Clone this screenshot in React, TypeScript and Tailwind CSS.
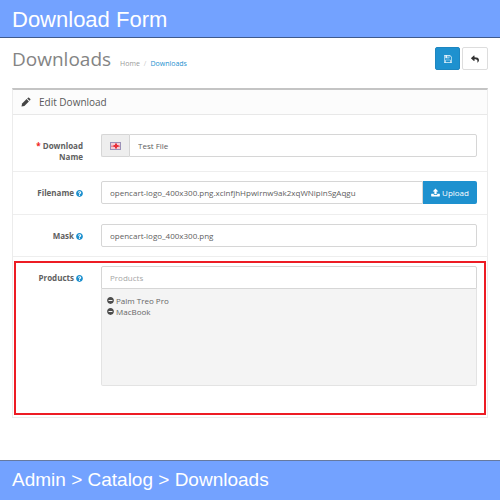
import React, { useState } from 'react';
import { FaMinusCircle, FaQuestionCircle, FaReply } from 'react-icons/fa';
import clsx from 'clsx';

interface FormRowProps {
    label: string;
    htmlFor: string;
    required?: boolean;
    help?: boolean;
    className?: string;
    children: React.ReactNode;
}

const inputStyles =
    'w-full min-w-0 border border-[#d6d6d6] bg-white px-2 text-[8px] text-[#606060] outline-none placeholder:text-[#a6a6a6]';

const FormRow: React.FC<FormRowProps> = ({ label, htmlFor, required, help, className, children }) => (
    <div className={clsx('flex gap-[18px] pr-[10px]', className)}>
        <label
            htmlFor={htmlFor}
            className="w-[70px] shrink-0 pt-[6px] text-right text-[8px] leading-[11px] font-bold text-[#606060]"
        >
            {required && <span className="text-[#f02020]">* </span>}
            {label}
            {help && <FaQuestionCircle className="ml-[2px] inline size-[7px] align-[-1px] text-[#1e91cf]" />}
        </label>
        <div className="min-w-0 flex-1">{children}</div>
    </div>
);

const FlagIcon = () => (
    <svg viewBox="0 0 11 8" className="h-2 w-[11px]" aria-hidden="true">
        <rect x="0.5" y="0.5" width="10" height="7" fill="#f3cdd6" stroke="#9c92b8" />
        <path d="M1 3.5h9v1.5H1z" fill="#ee8a94" />
        <path d="M5 1.5h2v1.5h1.5v2H7v1.5H5V5H3.5V3H5z" fill="#ea2f3a" />
    </svg>
);

const PencilIcon = () => (
    <svg viewBox="0 0 10 10" className="size-[10px]" fill="currentColor" aria-hidden="true">
        <path d="M0.5 9.5l0.6-2.9 4.5-4.5 2.3 2.3-4.5 4.5z" />
        <path d="M6.2 1.5l0.8-0.8q0.5-0.4 1 0l1.3 1.3q0.4 0.5 0 1l-0.8 0.8z" />
    </svg>
);

const SaveIcon = () => (
    <svg viewBox="0 128 1536 1536" className="size-2" fill="currentColor" aria-hidden="true">
        <path d="M384 1536h768v-384h-768v384zm896 0h128v-896q0-14-10-38.5t-20-34.5l-281-281q-10-10-34-20t-39-10v416q0 40-28 68t-68 28h-576q-40 0-68-28t-28-68v-416h-128v1280h128v-416q0-40 28-68t68-28h832q40 0 68 28t28 68v416zm-384-928v-320q0-13-9.5-22.5t-22.5-9.5h-192q-13 0-22.5 9.5t-9.5 22.5v320q0 13 9.5 22.5t22.5 9.5h192q13 0 22.5-9.5t9.5-22.5zm640 32v928q0 40-28 68t-68 28h-1344q-40 0-68-28t-28-68v-1344q0-40 28-68t68-28h928q40 0 88 20t76 48l280 280q28 28 48 76t20 88z" />
    </svg>
);

const UploadIcon = () => (
    <svg viewBox="0 0 16 16" className="size-[9px]" fill="currentColor" aria-hidden="true">
        <path d="M8 1l5 5.2h-3v5H6v-5H3z" />
        <path d="M1 10h4v2.4h6V10h4q0.7 0 0.7 0.7v3.6q0 0.7-0.7 0.7H1q-0.7 0-0.7-0.7v-3.6Q0.3 10 1 10z" />
    </svg>
);

const App: React.FC = () => {
    const [name, setName] = useState('Test File');
    const [filename, setFilename] = useState('opencart-logo_400x300.png.xclnfjhHpwirnw9ak2xqWNipinSgAqgu');
    const [mask, setMask] = useState('opencart-logo_400x300.png');
    const [products, setProducts] = useState(['Palm Treo Pro', 'MacBook']);

    return (
        <div className="flex min-h-screen flex-col bg-white font-['Open_Sans',sans-serif]">
            <header className="border-b border-[#3f5a8c] bg-[#73a2ff] px-3 pt-[3px] pb-px font-['Liberation_Sans',sans-serif] text-[22px] leading-[33px] text-white">
                Download Form
            </header>

            <main className="flex-1 px-3">
                {/* Page heading */}
                <div className="flex items-start justify-between pt-[9px]">
                    <div className="flex items-baseline">
                        <h1 className="text-[19px] leading-6 text-[#848484]">Downloads</h1>
                        <nav className="ml-[9px] flex gap-1 text-[7px] text-[#999999]">
                            <a href="#home">Home</a>
                            <span className="text-[#cccccc]">/</span>
                            <a href="#downloads" className="text-[#1e91cf]">Downloads</a>
                        </nav>
                    </div>
                    <div className="flex gap-[2px]">
                        <button type="button" aria-label="Save" className="flex h-[23px] w-[25px] items-center justify-center rounded-[2px] border border-[#1e86c0] bg-[#1e91cf] text-[#e4f2fa]">
                            <SaveIcon />
                        </button>
                        <button type="button" aria-label="Cancel" className="flex h-[23px] w-[26px] items-center justify-center rounded-[2px] border border-[#dddddd] bg-white text-[#333333]">
                            <FaReply className="size-[8px]" />
                        </button>
                    </div>
                </div>

                {/* Form panel */}
                <section className="mt-[17px] border border-t-2 border-[#ececec] border-t-[#c4c4c4]">
                    <h2 className="flex h-[25px] items-center gap-2 border-b border-[#e8e8e8] bg-[#fcfcfc] px-2 text-[10px] text-[#595959]">
                        <span className="text-[#444444]"><PencilIcon /></span>
                        Edit Download
                    </h2>
                    <form onSubmit={(e) => e.preventDefault()}>
                        <FormRow label="Download Name" htmlFor="name" required className="pt-[19px] pb-[9px]">
                            <div className="flex">
                                <span className="flex w-7 shrink-0 items-center justify-center rounded-l-[2px] border border-r-0 border-[#d6d6d6] bg-[#eeeeee]">
                                    <FlagIcon />
                                </span>
                                <input id="name" value={name} onChange={(e) => setName(e.target.value)} className={clsx(inputStyles, 'h-[23px] rounded-r-[2px]')} />
                            </div>
                        </FormRow>
                        <FormRow label="Filename" htmlFor="filename" help className="border-t border-[#eeeeee] pt-[9px] pb-[10px]">
                            <div className="flex">
                                <input id="filename" value={filename} onChange={(e) => setFilename(e.target.value)} className={clsx(inputStyles, 'h-[23px] rounded-l-[2px]')} />
                                <button type="button" className="flex w-[54px] shrink-0 items-center justify-center gap-[2px] rounded-r-[2px] bg-[#1e91cf] text-[8px] text-white">
                                    <UploadIcon />
                                    Upload
                                </button>
                            </div>
                        </FormRow>
                        <FormRow label="Mask" htmlFor="mask" help className="border-t border-[#eeeeee] pt-[9px] pb-[9px]">
                            <input id="mask" value={mask} onChange={(e) => setMask(e.target.value)} className={clsx(inputStyles, 'block h-[23px] rounded-[2px]')} />
                        </FormRow>
                        <div className="border-t border-[#eeeeee] px-px pt-1 pb-[2px]">
                            <div className="border-2 border-[#ed1c24] pt-[3px] pb-[27px]">
                                <div className="-mx-[3px]">
                                    <FormRow label="Products" htmlFor="products" help>
                                        <input id="products" placeholder="Products" className={clsx(inputStyles, 'block h-[23px] rounded-t-[2px]')} />
                                        <ul className="h-[97px] overflow-auto rounded-b-[2px] border border-t-0 border-[#e3e3e3] bg-[#f4f4f4] px-[5px] pt-[6px] text-[8px] leading-[11px] text-[#666666]">
                                            {products.map((product) => (
                                                <li key={product} className="flex items-center gap-[2px]">
                                                    <button
                                                        type="button"
                                                        aria-label={`Remove ${product}`}
                                                        onClick={() => setProducts(products.filter((p) => p !== product))}
                                                        className="flex"
                                                    >
                                                        <FaMinusCircle className="size-[7px] text-[#4d4d4d]" />
                                                    </button>
                                                    {product}
                                                </li>
                                            ))}
                                        </ul>
                                    </FormRow>
                                </div>
                            </div>
                        </div>
                    </form>
                </section>
            </main>

            <footer className="border-t border-[#66799f] bg-[#73a2ff] px-3 pt-px pb-[3px] font-['Liberation_Sans',sans-serif] text-[19px] leading-[35px] text-white">
                Admin &gt; Catalog &gt; Downloads
            </footer>
        </div>
    );
};

export default App;
